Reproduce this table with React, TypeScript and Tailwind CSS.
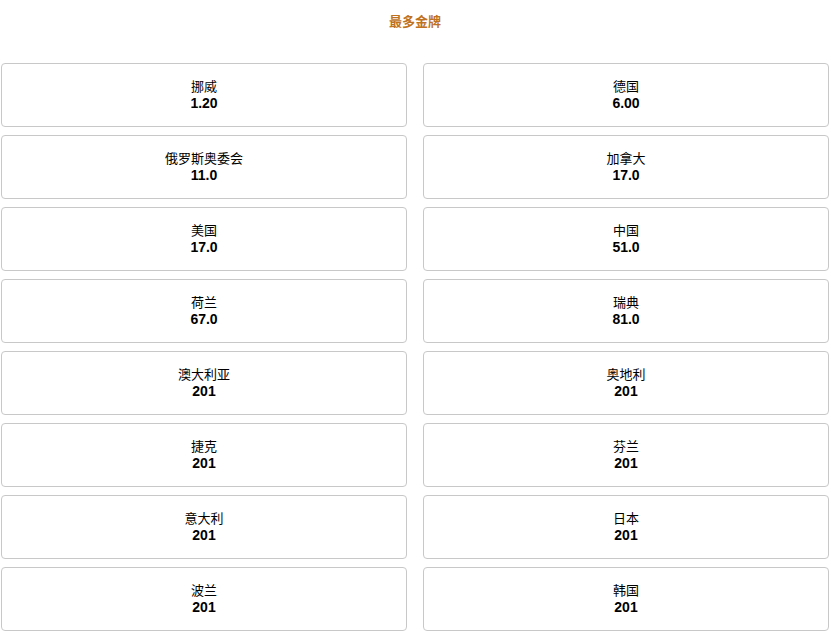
const rows: [string, string, string, string][] = [
  ["挪威", "1.20", "德国", "6.00"],
  ["俄罗斯奥委会", "11.0", "加拿大", "17.0"],
  ["美国", "17.0", "中国", "51.0"],
  ["荷兰", "67.0", "瑞典", "81.0"],
  ["澳大利亚", "201", "奥地利", "201"],
  ["捷克", "201", "芬兰", "201"],
  ["意大利", "201", "日本", "201"],
  ["波兰", "201", "韩国", "201"],
];

function Card({ name, odds }: { name: string; odds: string }) {
  return (
    <div className="h-[64px] rounded-[4px] border border-[#c8c8c8] bg-white flex flex-col items-center justify-center">
      <div className="text-[13px] leading-[16px] text-black">{name}</div>
      <div className="text-[14px] leading-[16px] font-bold text-black">{odds}</div>
    </div>
  );
}

export default function App() {
  return (
    <div className="w-[832px] h-[631px] bg-white overflow-hidden" style={{ fontFamily: '"Liberation Sans", "Noto Sans CJK SC", sans-serif' }}>
      <div className="h-[63px] pt-[14px] pr-[2px] text-center text-[13px] leading-[16px] font-bold text-[#c0721e]">最多金牌</div>
      <div className="grid grid-cols-[406px_406px] gap-x-[16px] gap-y-[8px] pl-[1px]">
        {rows.map((r, i) => (
          <div key={i} className="contents">
            <Card name={r[0]} odds={r[1]} />
            <Card name={r[2]} odds={r[3]} />
          </div>
        ))}
      </div>
    </div>
  );
}
